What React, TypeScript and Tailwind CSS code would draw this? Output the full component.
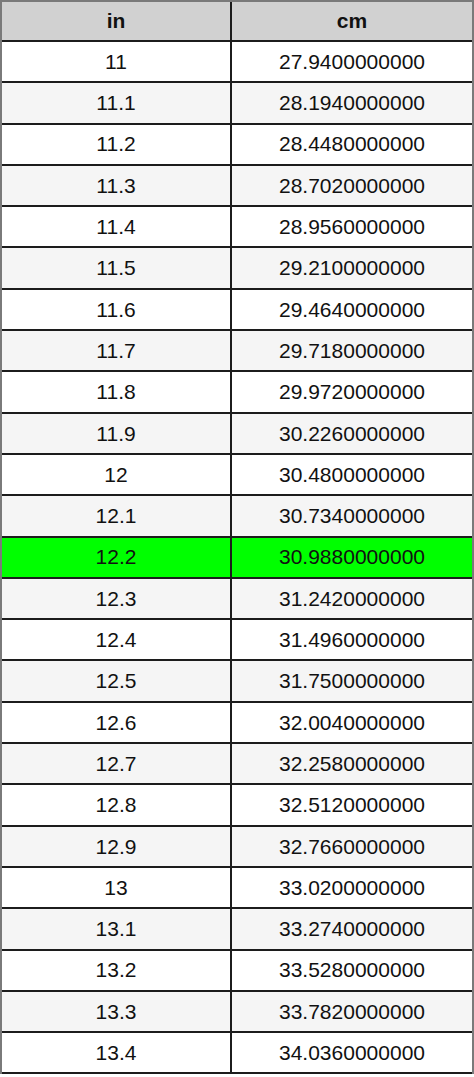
const inches = [
  "11", "11.1", "11.2", "11.3", "11.4", "11.5", "11.6", "11.7", "11.8", "11.9",
  "12", "12.1", "12.2", "12.3", "12.4", "12.5", "12.6", "12.7", "12.8", "12.9",
  "13", "13.1", "13.2", "13.3", "13.4",
];

const rows = inches.map((v) => ({
  inch: v,
  cm: (Math.round(parseFloat(v) * 2540) / 1000).toFixed(10),
}));

const HIGHLIGHT = "12.2";

export default function App() {
  return (
    <div className="w-[474px] h-[1077px] bg-white font-['Liberation_Sans',Arial,sans-serif] text-[21px] text-[#111]">
      <div className="border-x-2 border-t-2 border-[#7a7a7a]">
        <div className="flex h-[40px] bg-[#d1d1d1] border-b-2 border-[#1c1c1c] font-bold">
          <div className="w-[228px] flex items-center justify-center">in</div>
          <div className="w-[2px] bg-[#1c1c1c]" />
          <div className="flex-1 flex items-center justify-center">cm</div>
        </div>
        {rows.map((r, i) => {
          const bg =
            r.inch === HIGHLIGHT
              ? "bg-[#00ff00]"
              : i % 2 === 0
                ? "bg-white"
                : "bg-[#f5f5f5]";
          return (
            <div
              key={r.inch}
              className={`flex h-[41.3px] border-b-2 border-[#1c1c1c] ${bg}`}
            >
              <div className="w-[228px] flex items-center justify-center">{r.inch}</div>
              <div className="w-[2px] bg-[#1c1c1c]" />
              <div className="flex-1 flex items-center justify-center">{r.cm}</div>
            </div>
          );
        })}
      </div>
    </div>
  );
}
